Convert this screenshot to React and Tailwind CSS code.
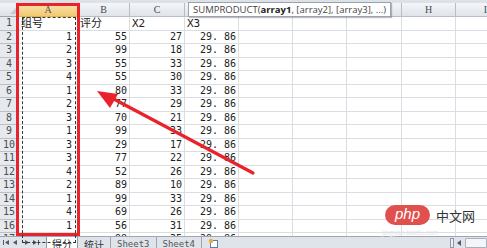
import React from 'react';

const cols = ['A', 'B', 'C', 'D', 'E', 'F', 'G', 'H', 'I'];

const rows = [
    ['组号', '评分', 'X2', 'X3'],
    [1, 55, 27, '29. 86'],
    [2, 99, 18, '29. 86'],
    [3, 55, 33, '29. 86'],
    [4, 55, 30, '29. 86'],
    [1, 80, 33, '29. 86'],
    [2, 77, 29, '29. 86'],
    [3, 70, 21, '29. 86'],
    [1, 99, 33, '29. 86'],
    [3, 29, 17, '29. 86'],
    [3, 77, 22, '29. 86'],
    [4, 52, 26, '29. 86'],
    [2, 89, 10, '29. 86'],
    [1, 99, 33, '29. 86'],
    [4, 69, 26, '29. 86'],
    [1, 56, 31, '29. 86'],
    [2, 98, 35, '29. 86'],
];

const grid = 'grid grid-cols-[19px_59px_52px_55px_54px_54px_54px_55px_54px_60px]';
const mono = "font-['DejaVu_Sans_Mono','Noto_Sans_CJK_SC',monospace]";

function HeaderRow() {
    return (
        <div className={`${grid} h-[14px]`}>
            <div className="relative border-r border-b border-[#9fa6b0] bg-gradient-to-b from-[#f3f5f8] to-[#dde2e8]">
                <span className="absolute right-[2px] bottom-[2px] w-0 h-0 border-l-[6px] border-l-transparent border-b-[6px] border-b-[#c6cbd2]" />
            </div>
            {cols.map((c) => (
                <div
                    key={c}
                    className={`flex items-center justify-center border-r border-b text-[10px] leading-none font-['Liberation_Serif',serif] ${
                        c === 'A'
                            ? 'border-[#e5b24a] bg-gradient-to-b from-[#fbe6b4] to-[#f3c86e] text-[#555]'
                            : 'border-[#b7bec8] bg-gradient-to-b from-[#f4f6f9] to-[#dfe4ea] text-[#4a4a4a]'
                    }`}
                >
                    {c}
                </div>
            ))}
        </div>
    );
}

function Row({ n, data }) {
    const text = n === 1;
    return (
        <div className={`${grid} h-[13.5px]`}>
            <div className={`flex items-center justify-center border-r border-b border-[#b9c0c9] bg-[#e6eaef] text-[10px] leading-none text-[#4d4d4d] ${mono}`}>
                {n}
            </div>
            {cols.map((c, i) => {
                const v = data[i];
                const pad = text ? 'justify-start pl-[2px] text-[11px]' : c === 'A' ? 'justify-end pr-[5px]' : 'justify-end pr-[2px]';
                return (
                    <div
                        key={c}
                        className={`flex items-center overflow-visible whitespace-nowrap border-r border-b border-[#dadde2] bg-white text-[10px] leading-none text-[#222] ${mono} ${pad}`}
                    >
                        {v}
                    </div>
                );
            })}
        </div>
    );
}

function NavArrows() {
    // first / prev / next / last sheet buttons
    return (
        <svg width="46" height="9" viewBox="0 0 46 9" className="shrink-0">
            <g fill="#4f5b69">
                <rect x="3" y="2" width="1" height="5" />
                <polygon points="9,2 9,7 5,4.5" />
                <polygon points="17,2 17,7 13,4.5" />
                <polygon points="25,2 25,7 29,4.5" />
                <polygon points="33,2 33,7 37,4.5" />
                <rect x="38" y="2" width="1" height="5" />
            </g>
        </svg>
    );
}

function SheetTabs() {
    return (
        <div className="flex h-[12px] items-start bg-[#dfe4ea] border-t border-[#9fa6b0] text-[10px] leading-[11px] text-[#333] overflow-hidden">
            <div className="flex h-full items-center">
                <NavArrows />
            </div>
            <div className="flex h-full items-stretch font-['Noto_Sans_CJK_SC',sans-serif]">
                <div className="flex items-start pt-[2px] bg-white px-[5px] border-x border-[#8e97a3] -mt-px">得分</div>
                <div className="flex items-start pt-[2px] px-[6px] border-r border-[#9fa6b0]">统计</div>
                <div className={`flex items-start pt-[2px] px-[6px] border-r border-[#9fa6b0] ${mono} text-[9px] text-[#555]`}>Sheet3</div>
                <div className={`flex items-start pt-[2px] px-[6px] border-r border-[#9fa6b0] ${mono} text-[9px] text-[#555]`}>Sheet4</div>
                <div className="flex items-center px-[6px]">
                    <svg width="11" height="10" viewBox="0 0 11 10">
                        <rect x="2.5" y="2.5" width="7" height="7" fill="#fff" stroke="#5b7fa8" strokeWidth="1" />
                        <circle cx="3" cy="3" r="2.2" fill="#f2a93b" />
                    </svg>
                </div>
            </div>
            <div className="ml-auto flex h-full items-center gap-[3px]">
                <span className="h-[10px] w-[4px] border border-[#8e97a3] bg-[#eef1f4]" />
                <svg width="5" height="6" viewBox="0 0 5 6">
                    <polygon points="4,0 4,6 0,3" fill="#4f5b69" />
                </svg>
                <span className="h-[10px] w-[22px] border border-[#a9b1bb] bg-[#f3f5f7] rounded-[1px]" />
            </div>
        </div>
    );
}

function Overlays() {
    return (
        <>
            {/* selection box around column A */}
            <div className="absolute left-[16px] top-[3px] w-[64px] h-[233px] border-[3px] border-[#e8232b] pointer-events-none" />
            {/* copy marquee */}
            <div className="absolute left-[22px] top-[17px] w-[54px] h-[226px] border border-dashed border-[#333] pointer-events-none" />

            {/* function tooltip */}
            <div className="absolute left-[188px] top-[2px] h-[15px] flex items-center px-[4px] bg-white border border-[#9aa3ad] shadow-[1px_1px_1px_rgba(0,0,0,0.25)] text-[9.5px] leading-none text-[#444] font-['Open_Sans',sans-serif] whitespace-nowrap">
                SUMPRODUCT(<b className="text-[#222]">array1</b>, [array2], [array3], ...)
            </div>

            {/* red pointer arrow */}
            <svg className="absolute left-0 top-0 pointer-events-none" width="487" height="248" viewBox="0 0 487 248">
                <line x1="253" y1="173" x2="110" y2="97" stroke="#e8232b" strokeWidth="3.2" strokeLinecap="round" />
                <polygon points="97,91 118,94 110,108" fill="#e8232b" />
            </svg>

            {/* site watermark */}
            <div className="absolute left-[385px] top-[205px] flex items-center gap-[6px] pointer-events-none">
                <div className="flex h-[20px] w-[45px] items-center justify-center rounded-full bg-[#e0514e] text-[15px] leading-none text-white font-['Liberation_Sans',sans-serif] italic pb-[3px]">
                    php
                </div>
                <span className="text-[13px] leading-none text-[#333] font-['Noto_Sans_CJK_SC',sans-serif]">中文网</span>
            </div>
            <div className="absolute left-[382px] top-[229px] text-[7px] leading-none text-[#e3e6ea] font-['Liberation_Sans',sans-serif] pointer-events-none">
                jingyan.baidu.com
            </div>
        </>
    );
}

export default function App() {
    return (
        <div className="relative w-[487px] h-[248px] overflow-hidden bg-white">
            <div className="flex h-full flex-col">
                <div className="h-[3px] bg-[#dde2e8]" />
                <HeaderRow />
                <div className="flex-1 overflow-hidden">
                    {rows.map((r, i) => (
                        <Row key={i} n={i + 1} data={r} />
                    ))}
                </div>
                <SheetTabs />
            </div>
            <Overlays />
        </div>
    );
}
